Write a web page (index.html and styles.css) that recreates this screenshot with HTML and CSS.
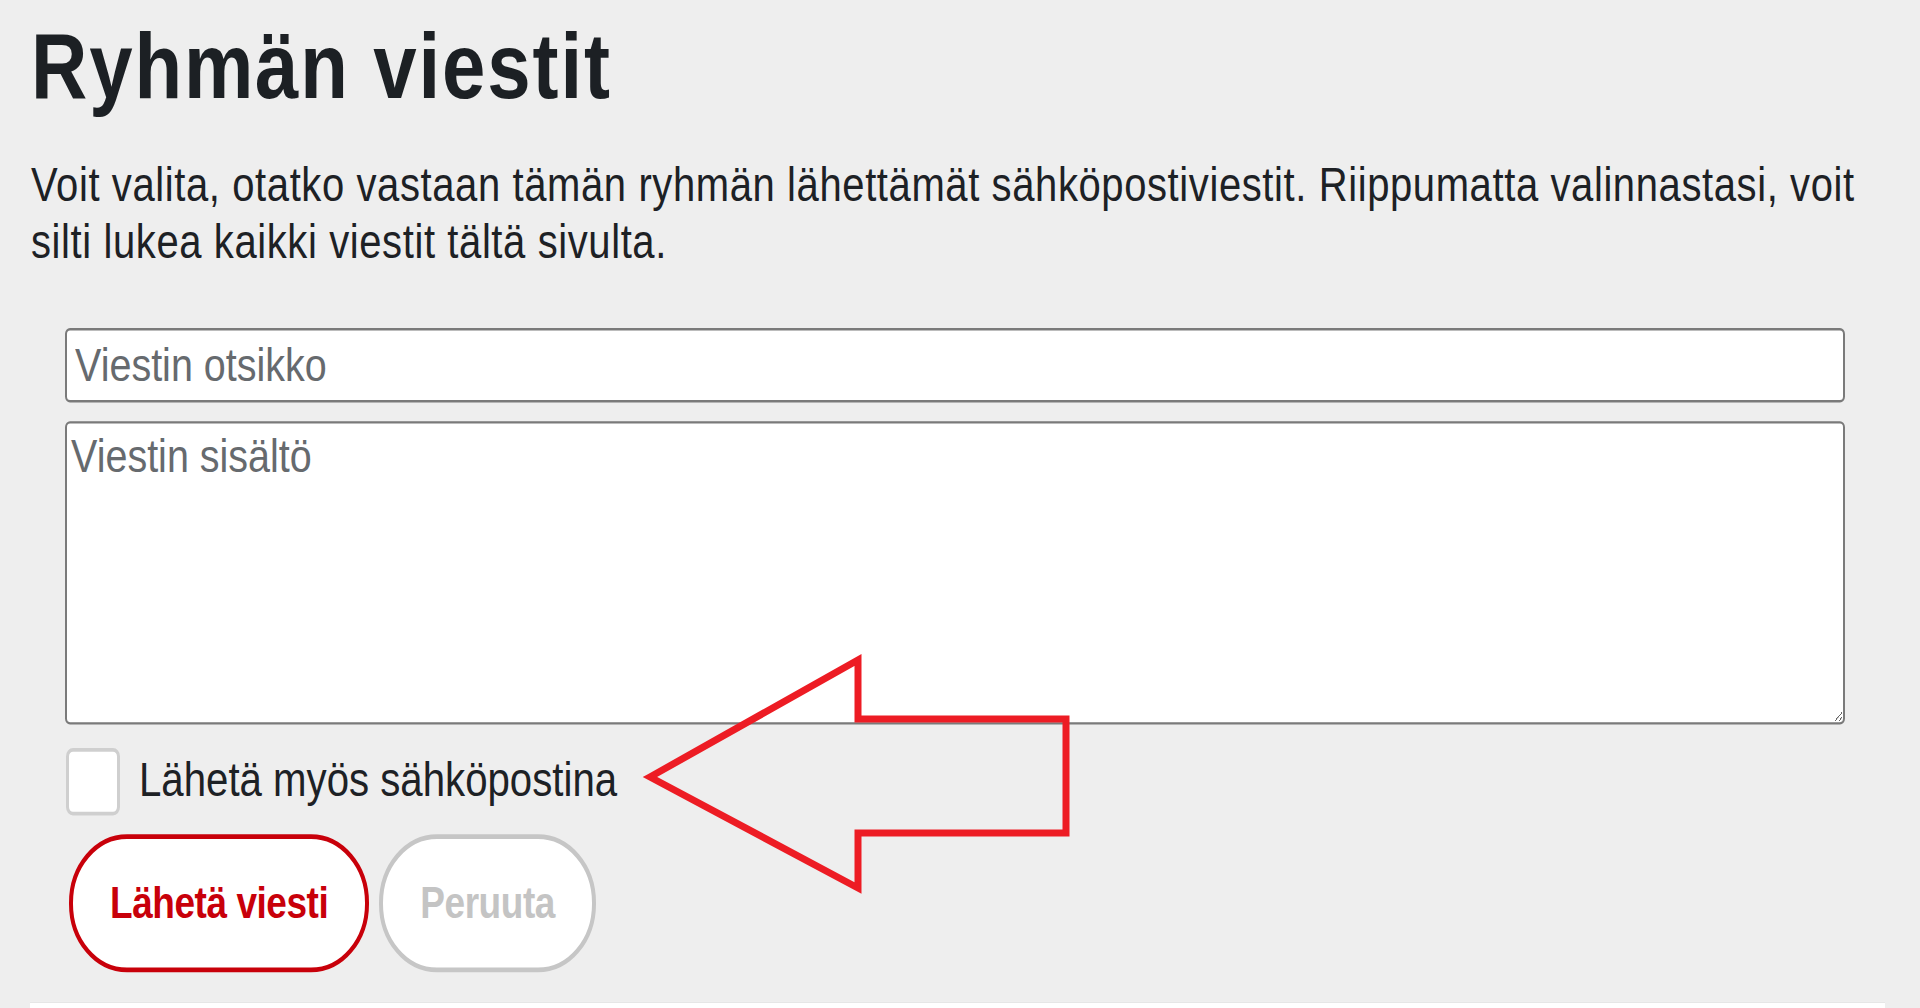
FILE: index.html
```html
<!DOCTYPE html>
<html lang="fi">
<head>
<meta charset="utf-8">
<title>Ryhmän viestit</title>
<link rel="stylesheet" href="styles.css">
</head>
<body>
<div class="page">
  <h1 class="title">Ryhmän viestit</h1>
  <p class="intro">Voit valita, otatko vastaan tämän ryhmän lähettämät sähköpostiviestit. Riippumatta valinnastasi, voit silti lukea kaikki viestit tältä sivulta.</p>
  <form class="msg-form">
    <input class="field" type="text" placeholder="Viestin otsikko">
    <textarea class="field area" placeholder="Viestin sisältö"></textarea>
    <label class="check-row">
      <input class="check" type="checkbox">
      <span class="check-label">Lähetä myös sähköpostina</span>
    </label>
    <div class="actions">
      <button type="button" class="btn btn-primary">Lähetä viesti</button>
      <button type="button" class="btn btn-cancel">Peruuta</button>
    </div>
  </form>
  <div class="next-card"></div>
</div>
<svg class="annot" width="1920" height="1008" viewBox="0 0 1920 1008" aria-hidden="true">
  <polygon points="650,777 858,660 858,719 1066,719 1066,833 858,833 858,888" fill="none" stroke="#ed1c24" stroke-width="7" stroke-linejoin="miter"/>
</svg>
</body>
</html>
```
FILE: styles.css
```css
html, body {
  margin: 0;
  padding: 0;
  background: #eeeeee;
}
body {
  position: relative;
  height: 1008px;
  overflow: hidden;
  font-family: "Liberation Sans", Arial, sans-serif;
  color: #1f2327;
}
/* the reference is a vertically stretched capture */
.page {
  padding: 17px 31px 0 31px;
  transform: scaleY(1.18);
  transform-origin: 0 0;
}
.title {
  margin: 0;
  font-size: 78px;
  line-height: 78px;
  font-weight: 700;
  letter-spacing: 1.85px;
  color: #1c2024;
}
.intro {
  margin: 37px 0 0 0;
  font-size: 40px;
  line-height: 48.7px;
  letter-spacing: 0.6px;
  color: #1d2125;
}
.msg-form {
  display: flex;
  flex-direction: column;
  margin: 48.5px 44px 0 34px;
}
.field {
  display: block;
  box-sizing: border-box;
  width: 100%;
  height: 62.7px;
  margin: 0;
  padding: 0 8px;
  border: 2px solid #7a7a7a;
  border-radius: 5px;
  background: #ffffff;
  font-family: inherit;
  font-size: 39.5px;
  color: #1f2328;
  outline: none;
}
.field::placeholder {
  color: #666a6e;
  opacity: 1;
}
.area {
  height: 256.8px;
  margin-top: 16.9px;
  padding: 4.8px 4px;
  line-height: normal;
  resize: vertical;
}
.check-row {
  display: flex;
  align-items: center;
  gap: 19px;
  margin-top: 19.5px;
}
.check {
  appearance: none;
  -webkit-appearance: none;
  margin: 0 0 0 1px;
  width: 54px;
  height: 56.8px;
  box-sizing: border-box;
  border: 3px solid #cfcfcf;
  border-radius: 7px;
  background: #ffffff;
}
.check-label {
  font-size: 40.2px;
  line-height: 46px;
  color: #1d2125;
}
.actions {
  display: flex;
  gap: 10px;
  margin-top: 16.9px;
  margin-left: 4px;
}
.btn {
  box-sizing: border-box;
  height: 116.1px;
  padding: 0 37px;
  border-radius: 58px;
  background: #ffffff;
  font-family: inherit;
  font-size: 37px;
  font-weight: 700;
  letter-spacing: -0.45px;
  cursor: pointer;
}
.btn-primary {
  border: 4px solid #c8000a;
  color: #c8000a;
}
.btn-cancel {
  border: 4px solid #c6c6c6;
  color: #c4c4c4;
}
.next-card {
  margin-top: 25.5px;
  margin-right: 4px;
  margin-left: -1px;
  height: 40px;
  background: #ffffff;
  border-top: 1px solid #e6e6e6;
}
.annot {
  position: absolute;
  left: 0;
  top: 0;
  pointer-events: none;
}
```
